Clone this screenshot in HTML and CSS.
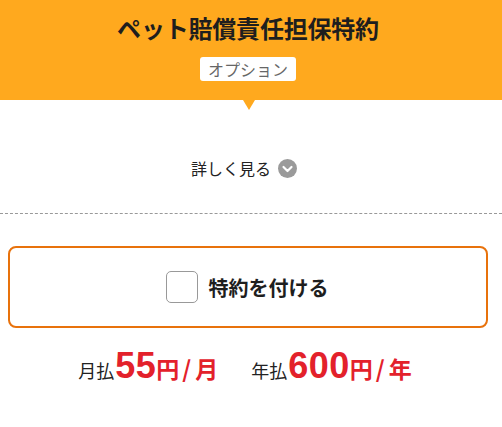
FILE: index.html
```html
<!DOCTYPE html>
<html lang="ja">
<head>
<meta charset="utf-8">
<title>ペット賠償責任担保特約</title>
<link rel="stylesheet" href="styles.css">
</head>
<body>
<header class="hero">
  <h1 class="hero-title">ペット賠償責任担保特約</h1>
  <span class="badge">オプション</span>
</header>
<div class="pointer"></div>
<div class="more">
  <span class="more-text">詳しく見る</span>
  <span class="more-icon"><svg width="19" height="19" viewBox="0 0 19 19"><circle cx="9.5" cy="9.5" r="9.5" fill="#9a9a9a"/><path d="M5.5 8 L9.5 12 L13.5 8" fill="none" stroke="#fff" stroke-width="2.2" stroke-linecap="round" stroke-linejoin="round"/></svg></span>
</div>
<hr class="divider">
<div class="content">
  <label class="option-box">
    <span class="checkbox"></span>
    <span class="option-label">特約を付ける</span>
  </label>
  <div class="prices">
    <div class="price">
      <span class="price-label">月払</span><span class="price-num">55</span><span class="price-unit">円<span class="slash">/</span>月</span>
    </div>
    <div class="price">
      <span class="price-label">年払</span><span class="price-num">600</span><span class="price-unit">円<span class="slash">/</span>年</span>
    </div>
  </div>
</div>
</body>
</html>
```
FILE: styles.css
```css
* { box-sizing: border-box; }
body {
  margin: 0;
  background: #fff;
  font-family: "Noto Sans CJK JP", "Noto Sans", sans-serif;
  color: #222;
}
.hero {
  height: 100px;
  background: #ffa91e;
  display: flex;
  flex-direction: column;
  align-items: center;
  padding: 12px 6px 0 0;
}
.hero-title {
  margin: 0;
  font-size: 24px;
  line-height: 32px;
  font-weight: 700;
  color: #1e1e1e;
  letter-spacing: -0.2px;
}
.badge {
  margin-top: 13px;
  height: 24px;
  line-height: 24px;
  padding: 0 8px;
  background: #fff;
  border-radius: 3px;
  font-size: 16px;
  color: #666;
}
.pointer {
  width: 0;
  height: 0;
  margin: 0 auto;
  position: relative;
  left: -2px;
  border-left: 6.5px solid transparent;
  border-right: 6.5px solid transparent;
  border-top: 10px solid #ffa91e;
}
.more {
  margin-top: 46px;
  display: flex;
  justify-content: center;
  align-items: center;
  height: 24px;
  padding-right: 14px;
}
.more-text {
  font-size: 16px;
  line-height: 24px;
  color: #222;
}
.more-icon {
  margin-left: 7px;
  display: flex;
}
.divider {
  margin: 33px 0 0;
  border: 0;
  border-top: 1px dashed #999;
  height: 0;
}
.content {
  padding: 0 14px 0 8px;
}
.option-box {
  margin-top: 32px;
  height: 82px;
  border: 2px solid #e8720c;
  border-radius: 8px;
  display: flex;
  align-items: center;
  justify-content: center;
  gap: 11px;
  padding-right: 2px;
}
.checkbox {
  width: 32px;
  height: 32px;
  border: 1px solid #999;
  border-radius: 5px;
  background: #fff;
}
.option-label {
  font-size: 20px;
  font-weight: 700;
  color: #1e1e1e;
}
.prices {
  margin-top: 16px;
  display: flex;
  justify-content: center;
  gap: 33px;
  padding-right: 6px;
}
.price {
  display: flex;
  align-items: baseline;
}
.price-label {
  font-size: 18px;
  color: #222;
}
.price-num {
  font-family: "Liberation Sans", "Noto Sans", sans-serif;
  font-size: 36px;
  font-weight: 700;
  color: #e3212b;
  line-height: 44px;
  margin-left: 1px;
  letter-spacing: 0.5px;
}
.price-unit {
  font-size: 23px;
  font-weight: 700;
  color: #e3212b;
}
.slash {
  margin: 0 4px 0 3px;
}
```
